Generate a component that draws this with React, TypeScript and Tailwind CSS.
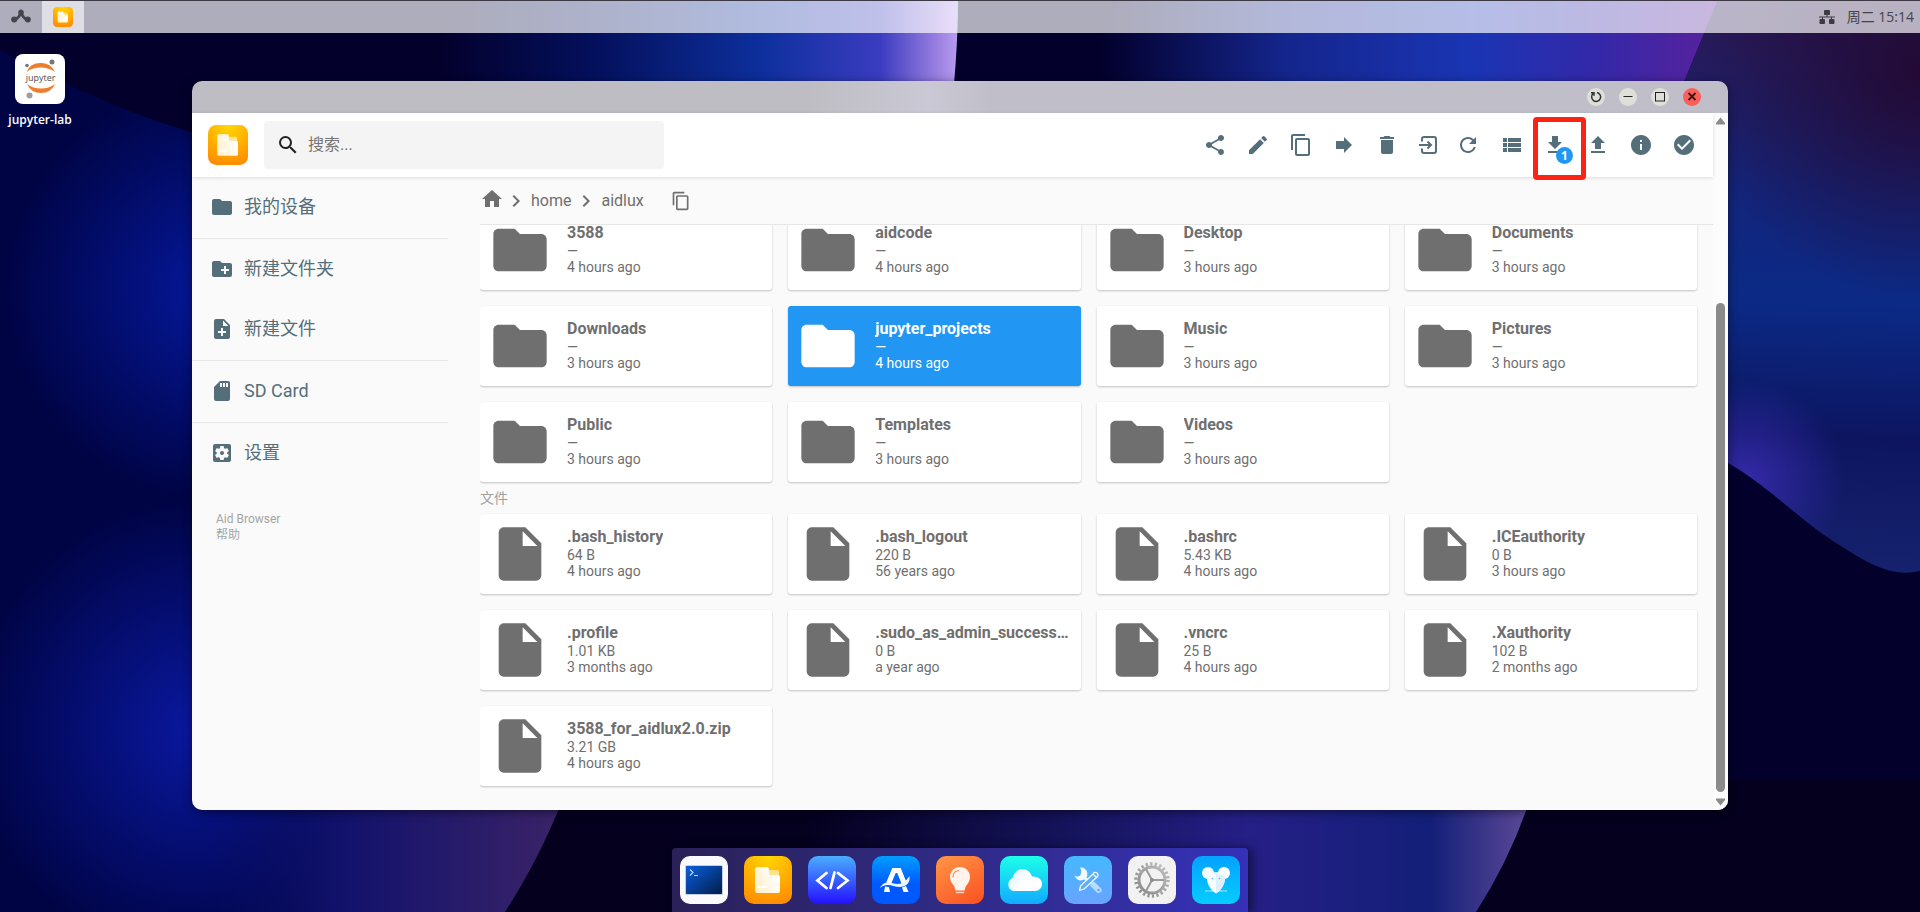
import React from 'react';
import {
  MdCheckCircle,
  MdContentCopy,
  MdCreateNewFolder,
  MdDelete,
  MdEdit,
  MdFolder,
  MdForward,
  MdHome,
  MdInfo,
  MdInsertDriveFile,
  MdKeyboardArrowRight,
  MdNoteAdd,
  MdRefresh,
  MdSdStorage,
  MdSearch,
  MdSettingsApplications,
  MdShare,
  MdViewList,
} from 'react-icons/md';

interface Entry {
  name: string;
  size: string;
  modified: string;
  selected?: boolean;
}

const folders: Entry[] = [
  { name: '3588', size: '—', modified: '4 hours ago' },
  { name: 'aidcode', size: '—', modified: '4 hours ago' },
  { name: 'Desktop', size: '—', modified: '3 hours ago' },
  { name: 'Documents', size: '—', modified: '3 hours ago' },
  { name: 'Downloads', size: '—', modified: '3 hours ago' },
  { name: 'jupyter_projects', size: '—', modified: '4 hours ago', selected: true },
  { name: 'Music', size: '—', modified: '3 hours ago' },
  { name: 'Pictures', size: '—', modified: '3 hours ago' },
  { name: 'Public', size: '—', modified: '3 hours ago' },
  { name: 'Templates', size: '—', modified: '3 hours ago' },
  { name: 'Videos', size: '—', modified: '3 hours ago' },
];

const files: Entry[] = [
  { name: '.bash_history', size: '64 B', modified: '4 hours ago' },
  { name: '.bash_logout', size: '220 B', modified: '56 years ago' },
  { name: '.bashrc', size: '5.43 KB', modified: '4 hours ago' },
  { name: '.ICEauthority', size: '0 B', modified: '3 hours ago' },
  { name: '.profile', size: '1.01 KB', modified: '3 months ago' },
  { name: '.sudo_as_admin_successful', size: '0 B', modified: 'a year ago' },
  { name: '.vncrc', size: '25 B', modified: '4 hours ago' },
  { name: '.Xauthority', size: '102 B', modified: '2 months ago' },
  { name: '3588_for_aidlux2.0.zip', size: '3.21 GB', modified: '4 hours ago' },
];

const rightSheet = 'M1718 0H1920V571C1890 578 1866 562 1833 541S1767 485 1728 463L1660 440V140Z';
const leftSheet = 'M0 50Q110 110 210 138L560 300V912H0Z';

const Wallpaper: React.FC = () => (
  <svg
    className="absolute inset-0 h-full w-full"
    viewBox="0 0 1920 912"
    preserveAspectRatio="none"
    aria-hidden="true"
  >
    <defs>
      <linearGradient id="wp-top" x1="440" x2="958" y1="0" y2="0" gradientUnits="userSpaceOnUse">
        <stop offset="0" stopColor="#03002c" />
        <stop offset="0.3" stopColor="#04105c" />
        <stop offset="0.62" stopColor="#0d2f9c" />
        <stop offset="0.85" stopColor="#3a3cc0" />
        <stop offset="0.96" stopColor="#9a7fe0" />
        <stop offset="1" stopColor="#b79df0" />
      </linearGradient>
      <linearGradient id="wp-topright" x1="1100" x2="1720" y1="0" y2="0" gradientUnits="userSpaceOnUse">
        <stop offset="0" stopColor="#03002c" />
        <stop offset="0.3" stopColor="#14258c" />
        <stop offset="0.6" stopColor="#1a35b4" />
        <stop offset="0.8" stopColor="#3328a8" />
        <stop offset="1" stopColor="#5a219c" />
      </linearGradient>
      <linearGradient id="wp-right" x1="1800" x2="1780" y1="30" y2="570" gradientUnits="userSpaceOnUse">
        <stop offset="0" stopColor="#281a58" />
        <stop offset="0.3" stopColor="#13257c" />
        <stop offset="0.5" stopColor="#0b2a86" />
        <stop offset="0.75" stopColor="#0d1560" />
        <stop offset="1" stopColor="#16226e" />
      </linearGradient>
      <radialGradient id="wp-maroon" cx="1920" cy="70" r="230" gradientUnits="userSpaceOnUse">
        <stop offset="0" stopColor="#220a34" />
        <stop offset="1" stopColor="#220a34" stopOpacity="0" />
      </radialGradient>
      <radialGradient id="wp-violet" cx="1745" cy="480" r="100" gradientUnits="userSpaceOnUse">
        <stop offset="0" stopColor="#3a2cb4" stopOpacity="0.85" />
        <stop offset="1" stopColor="#3a2cb4" stopOpacity="0" />
      </radialGradient>
      <radialGradient id="wp-left" cx="215" cy="290" r="210" gradientUnits="userSpaceOnUse">
        <stop offset="0" stopColor="#05189c" />
        <stop offset="1" stopColor="#05189c" stopOpacity="0" />
      </radialGradient>
      <radialGradient id="wp-leftlow" cx="200" cy="730" r="230" gradientUnits="userSpaceOnUse">
        <stop offset="0" stopColor="#0a18a0" />
        <stop offset="1" stopColor="#0a18a0" stopOpacity="0" />
      </radialGradient>
      <linearGradient id="wp-bottom1" x1="200" x2="560" y1="0" y2="0" gradientUnits="userSpaceOnUse">
        <stop offset="0" stopColor="#060b5c" stopOpacity="0" />
        <stop offset="0.4" stopColor="#12126c" />
        <stop offset="1" stopColor="#3a2368" />
      </linearGradient>
      <linearGradient id="wp-bottom2" x1="800" x2="1525" y1="0" y2="0" gradientUnits="userSpaceOnUse">
        <stop offset="0" stopColor="#04001e" />
        <stop offset="0.35" stopColor="#141258" />
        <stop offset="0.62" stopColor="#251f86" />
        <stop offset="0.87" stopColor="#131f78" />
        <stop offset="1" stopColor="#5a4796" />
      </linearGradient>
    </defs>
    <rect width="1920" height="912" fill="#03002c" />
    <path d={leftSheet} fill="#000445" />
    <path d={leftSheet} fill="url(#wp-left)" />
    <rect y="400" width="560" height="512" fill="url(#wp-leftlow)" />
    <rect x="500" y="780" width="1420" height="132" fill="#04001e" />
    <path d="M200 780H570Q545 850 505 912H200Z" fill="url(#wp-bottom1)" />
    <path d="M800 780H1536Q1516 850 1476 912H800Z" fill="url(#wp-bottom2)" />
    <path d="M440 0H958Q958 60 948 140H440Z" fill="url(#wp-top)" />
    <path d="M1100 0H1718L1660 140H1100Z" fill="url(#wp-topright)" />
    <path d={rightSheet} fill="url(#wp-right)" />
    <path d={rightSheet} fill="url(#wp-maroon)" />
    <path d={rightSheet} fill="url(#wp-violet)" />
  </svg>
);

const FilesLogo: React.FC<{ className?: string }> = ({ className }) => (
  <svg className={className} viewBox="0 0 48 48" aria-hidden="true">
    <defs>
      <radialGradient id="files-bg" cx="0.5" cy="0" r="1.05">
        <stop offset="0" stopColor="#ffd800" />
        <stop offset="1" stopColor="#ff8a00" />
      </radialGradient>
      <linearGradient id="files-sheet" x1="0" y1="1" x2="1" y2="0.6">
        <stop offset="0" stopColor="#ffeec4" />
        <stop offset="1" stopColor="#ffffff" />
      </linearGradient>
    </defs>
    <rect width="48" height="48" rx="10" fill="url(#files-bg)" />
    <path d="M23 14h10a2 2 0 0 1 2 2v6H23z" fill="#ffe38a" />
    <path
      d="M13 11h10a2 2 0 0 1 2 2v4a2 2 0 0 0 2 2h7a2 2 0 0 1 2 2v14a2 2 0 0 1-2 2H13a2 2 0 0 1-2-2V13a2 2 0 0 1 2-2z"
      fill="url(#files-sheet)"
    />
    <path d="M14 31h9" stroke="#fff" strokeWidth="1.5" strokeLinecap="round" />
  </svg>
);

const TerminalLogo: React.FC<{ className?: string }> = ({ className }) => (
  <svg className={className} viewBox="0 0 48 48" aria-hidden="true">
    <defs>
      <linearGradient id="term-screen" x1="0" y1="0" x2="1" y2="1">
        <stop offset="0" stopColor="#0a60e0" />
        <stop offset="1" stopColor="#021c48" />
      </linearGradient>
    </defs>
    <rect width="48" height="48" rx="10" fill="#fafafc" />
    <rect x="5" y="9" width="38" height="30" rx="1.5" fill="#8aa0c0" opacity="0.5" />
    <rect x="6" y="10" width="36" height="28" rx="1" fill="url(#term-screen)" />
    <path d="M10 13.5l3 3-3 3M14 19.5h4" fill="none" stroke="#b9d6ff" strokeWidth="1.2" />
  </svg>
);

const CodeLogo: React.FC<{ className?: string }> = ({ className }) => (
  <svg className={className} viewBox="0 0 48 48" aria-hidden="true">
    <defs>
      <linearGradient id="code-bg" x1="0" y1="0" x2="0" y2="1">
        <stop offset="0" stopColor="#4aaeff" />
        <stop offset="1" stopColor="#2410ff" />
      </linearGradient>
    </defs>
    <rect width="48" height="48" rx="10" fill="url(#code-bg)" />
    <path
      d="M18.5 17l-9 7.5 9 7.500M30 17l9.500 7.500L30 32M26.500 16.500l-4 15.500"
      fill="none"
      stroke="#fff"
      strokeWidth="2.8"
      strokeLinecap="round"
    />
  </svg>
);

const StoreLogo: React.FC<{ className?: string }> = ({ className }) => (
  <svg className={className} viewBox="0 0 48 48" aria-hidden="true">
    <defs>
      <linearGradient id="store-bg" x1="0" y1="0" x2="0" y2="1">
        <stop offset="0" stopColor="#009dff" />
        <stop offset="0.6" stopColor="#0058ff" />
        <stop offset="1" stopColor="#0058ff" />
      </linearGradient>
    </defs>
    <rect width="48" height="48" rx="10" fill="url(#store-bg)" />
    <path d="M16.5 27.500L22 14.500h5L32 27" fill="none" stroke="#fff" strokeWidth="5" />
    <path d="M8 32c3-7 9-6 14-4.500 7 1.500 11-1 15.500-7.500 1 7-3.500 11-10 11-7 0-12-5-19.500 1z" fill="#e8f4ff" />
    <path d="M13 30.500l4 .5 1 5h-6zM30 31.500l4-1.500 2.500 6h-5z" fill="#fff" />
  </svg>
);

const BulbLogo: React.FC<{ className?: string }> = ({ className }) => (
  <svg className={className} viewBox="0 0 48 48" aria-hidden="true">
    <defs>
      <linearGradient id="bulb-bg" x1="0.2" y1="0" x2="0.8" y2="1">
        <stop offset="0" stopColor="#ff9143" />
        <stop offset="1" stopColor="#fb5424" />
      </linearGradient>
    </defs>
    <rect width="48" height="48" rx="10" fill="url(#bulb-bg)" />
    <path
      d="M24 11c6 0 10 4.500 10 10 0 4-2 6-4 9-1 1.500-1 4-1.500 4.500h-9c-.5-.5-.5-3-1.500-4.500-2-3-4-5-4-9 0-5.500 4-10 10-10z"
      fill="#fff3ec"
    />
    <path d="M17 21c0-3.500 2-6 5.500-6.500" fill="none" stroke="#ff8a50" strokeWidth="1.2" strokeLinecap="round" />
    <path d="M20.500 36.500h7" stroke="#ffd9c8" strokeWidth="1.5" strokeLinecap="round" />
  </svg>
);

const CloudLogo: React.FC<{ className?: string }> = ({ className }) => (
  <svg className={className} viewBox="0 0 48 48" aria-hidden="true">
    <defs>
      <linearGradient id="cloud-bg" x1="0" y1="0" x2="0" y2="1">
        <stop offset="0" stopColor="#1dffe9" />
        <stop offset="1" stopColor="#12aaff" />
      </linearGradient>
      <linearGradient id="cloud-body" x1="0" y1="0" x2="1" y2="0.5">
        <stop offset="0" stopColor="#d3edff" />
        <stop offset="0.6" stopColor="#fff" />
      </linearGradient>
    </defs>
    <rect width="48" height="48" rx="10" fill="url(#cloud-bg)" />
    <path
      d="M13 35a7 7 0 0 1-.5-13c1-5 5-9 10-9 4.500 0 8 3 9.500 7.500 6-.5 10 3 10 7.500 0 4-3 7-7 7z"
      fill="url(#cloud-body)"
    />
  </svg>
);

const ToolsLogo: React.FC<{ className?: string }> = ({ className }) => (
  <svg className={className} viewBox="0 0 48 48" aria-hidden="true">
    <defs>
      <linearGradient id="tools-bg" x1="0" y1="0" x2="0" y2="1">
        <stop offset="0" stopColor="#45b8ff" />
        <stop offset="1" stopColor="#68a4ff" />
      </linearGradient>
    </defs>
    <rect width="48" height="48" rx="10" fill="url(#tools-bg)" />
    <path d="M29.500 29l5 5" stroke="#b7dcff" strokeWidth="6" strokeLinecap="round" />
    <circle cx="34.5" cy="34" r="1.3" fill="#68a4ff" />
    <path d="M16 11.500a6.500 6.500 0 1 1-5.500 7.500c1.500 2 4 2 5.500.5s1.800-5 0-8z" fill="#eef8ff" />
    <path d="M21 22l3 3" stroke="#eef8ff" strokeWidth="3" />
    <path
      d="M29 18l3.500 3.500-12.500 11.500-4.500 1.500 1-4.500zM29 18c1-3 5.500-1.500 5 1.500 0 1-.5 1.500-1.500 2"
      fill="#5aafff"
      stroke="#eef8ff"
      strokeWidth="1.3"
      strokeLinejoin="round"
    />
  </svg>
);

const GearLogo: React.FC<{ className?: string }> = ({ className }) => (
  <svg className={className} viewBox="0 0 48 48" aria-hidden="true">
    <defs>
      <linearGradient id="gear-metal" x1="1" y1="0" x2="0" y2="1">
        <stop offset="0" stopColor="#bcbcbc" />
        <stop offset="1" stopColor="#8a8a8a" />
      </linearGradient>
    </defs>
    <rect width="48" height="48" rx="10" fill="#f2f2f3" />
    <g fill="none" stroke="url(#gear-metal)">
      <circle cx="24" cy="24" r="16" strokeWidth="3.5" strokeDasharray="2.2 2.37" />
      <circle cx="24" cy="24" r="13" strokeWidth="3" />
    </g>
    <path d="M24 24h12M24 24l-6-11M24 24l-6 11" stroke="#9a9a9a" strokeWidth="2" />
    <circle cx="24" cy="24" r="2" fill="#8c8c8c" />
  </svg>
);

const MouseLogo: React.FC<{ className?: string }> = ({ className }) => (
  <svg className={className} viewBox="0 0 48 48" aria-hidden="true">
    <defs>
      <linearGradient id="mouse-bg" x1="0" y1="0" x2="0" y2="1">
        <stop offset="0" stopColor="#04a2ff" />
        <stop offset="1" stopColor="#06ccff" />
      </linearGradient>
    </defs>
    <rect width="48" height="48" rx="10" fill="url(#mouse-bg)" />
    <path d="M13 35h22" stroke="#8fe4ff" strokeWidth="1.2" />
    <circle cx="16" cy="17" r="6" fill="#f4fbff" />
    <circle cx="32" cy="17" r="6" fill="#fff" />
    <path d="M15 20c2-5 16-5 18 0 1 6-3 14-9 17.500C18 34 14 26 15 20z" fill="#f8fcff" />
    <path d="M24 18c5 0 8 1 9 3 0 6-3 13-9 16.500z" fill="#dff0fb" />
    <circle cx="20.5" cy="22.5" r="0.8" fill="#4ac0f0" />
    <circle cx="27.5" cy="22.5" r="0.8" fill="#4ac0f0" />
  </svg>
);

const dockApps = [
  { label: 'Terminal', Logo: TerminalLogo },
  { label: 'Files', Logo: FilesLogo },
  { label: 'Code', Logo: CodeLogo },
  { label: 'App Center', Logo: StoreLogo },
  { label: 'Tips', Logo: BulbLogo },
  { label: 'Cloud', Logo: CloudLogo },
  { label: 'Tools', Logo: ToolsLogo },
  { label: 'Settings', Logo: GearLogo },
  { label: 'Mouse', Logo: MouseLogo },
];

const TopBar: React.FC = () => (
  <header className="flex h-[33px] items-stretch border-t border-[#3c3844] bg-white/68">
    <button aria-label="Menu" className="flex w-[42px] items-center justify-center">
      <svg className="h-5 w-5" viewBox="0 0 20 20" aria-hidden="true">
        <path d="M3.5 13Q8 11 10 5.500 12 11 16.500 13" fill="none" stroke="#45444c" strokeWidth="2.8" />
        <circle cx="10" cy="5.5" r="2.8" fill="#45444c" />
        <circle cx="3.2" cy="12.5" r="3" fill="#45444c" />
        <circle cx="16.8" cy="12.5" r="3" fill="#45444c" />
      </svg>
    </button>
    <button aria-label="Files" className="flex w-[42px] items-center justify-center bg-white/60">
      <FilesLogo className="h-5 w-5" />
    </button>
    <div className="ml-auto flex items-center gap-3 pr-1.5 text-sm text-[#45444c]">
      <svg className="h-4 w-4" viewBox="0 0 16 16" fill="#3c3b42" aria-hidden="true">
        <rect x="5" y="1" width="6" height="5" rx="1" />
        <rect x="0.5" y="10" width="5.5" height="5" rx="1" />
        <rect x="10" y="10" width="5.5" height="5" rx="1" />
        <path d="M0 7.500h16v1H0zM7.500 6h1v2h-1zM3 8h1v2H3zM12 8h1v2h-1z" />
      </svg>
      <time className="font-['Open_Sans','Noto_Sans_CJK_SC',sans-serif]">周二 15:14</time>
    </div>
  </header>
);

const DesktopIcon: React.FC = () => (
  <button className="mt-[21px] flex w-20 flex-col items-center gap-2 self-start font-['Open_Sans',sans-serif] text-xs font-semibold text-white">
    <svg className="size-[50px]" viewBox="0 0 50 50" aria-hidden="true">
      <rect width="50" height="50" rx="8" fill="#fff" />
      <path d="M11.5 18Q15 9 25.500 9T40 18Q34 13.500 25.500 13.500T11.500 18z" fill="#f07c2e" />
      <path d="M12 30Q16 39 26 39T40 30Q34 34.500 26 34.500T12 30z" fill="#f07c2e" />
      <circle cx="37" cy="8" r="2.5" fill="#767677" />
      <circle cx="12" cy="11.5" r="1.8" fill="#767677" />
      <circle cx="14.5" cy="41.5" r="3" fill="#9e9e9e" />
      <text
        x="25.5"
        y="26.5"
        textAnchor="middle"
        fontSize="9"
        fontWeight="400"
        fontFamily="Open Sans, sans-serif"
        fill="#4e4e4e"
      >
        jupyter
      </text>
    </svg>
    jupyter-lab
  </button>
);

const TitleBar: React.FC = () => (
  <div className="flex h-8 shrink-0 items-center justify-end gap-3.5 bg-linear-to-r from-[#bebdc3] from-40% via-[#cac8d4] via-48% to-[#c0bfc9] to-52% pr-[27px]">
    <button aria-label="Restore" className="flex size-[18px] items-center justify-center rounded-full bg-[#dfdfd9]">
      <svg className="size-3" viewBox="0 0 12 12" fill="none" stroke="#333" strokeWidth="1.5" aria-hidden="true">
        <path d="M3.2 2.500A4.500 4.500 0 1 0 7 1.500M1 1.800h3v3" />
      </svg>
    </button>
    <button aria-label="Minimize" className="flex size-[18px] items-center justify-center rounded-full bg-[#dfdfd9]">
      <svg className="size-3" viewBox="0 0 12 12" fill="none" stroke="#222" strokeWidth="1.2" aria-hidden="true">
        <path d="M1.5 5.500h9" />
      </svg>
    </button>
    <button aria-label="Maximize" className="flex size-[18px] items-center justify-center rounded-full bg-[#dfdfd9]">
      <svg className="size-3" viewBox="0 0 12 12" fill="none" stroke="#222" strokeWidth="1" aria-hidden="true">
        <rect x="1.5" y="1.5" width="9" height="8.5" />
      </svg>
    </button>
    <button aria-label="Close" className="flex size-[18px] items-center justify-center rounded-full bg-[#fb5f5c]">
      <svg className="size-3" viewBox="0 0 12 12" fill="none" stroke="#3c1414" strokeWidth="1.8" aria-hidden="true">
        <path d="M2.5 2l7 7M9.500 2l-7 7" />
      </svg>
    </button>
  </div>
);

const ToolButton: React.FC<{ label: string; narrow?: boolean; children: React.ReactNode }> = ({
  label,
  narrow,
  children,
}) => (
  <button aria-label={label} className={`relative flex h-10 items-center justify-center ${narrow ? 'w-10' : 'w-[43px]'}`}>
    {children}
  </button>
);

const Toolbar: React.FC = () => (
  <div className="z-10 flex h-16 shrink-0 items-center bg-white pr-2 pl-4 shadow-[0_1px_4px_rgba(0,0,0,0.12)]">
    <FilesLogo className="size-10" />
    <div className="ml-4 flex h-12 w-[400px] items-center gap-2 rounded bg-[#f4f4f4] px-3">
      <MdSearch className="size-6 text-[#212121]" aria-hidden="true" />
      <input
        type="text"
        aria-label="搜索"
        placeholder="搜索..."
        className="min-w-0 flex-1 bg-transparent text-base outline-none placeholder:text-[#757575]"
      />
    </div>
    <div className="ml-auto flex items-center gap-0.5 text-2xl text-[#546e7a]">
      <div className="flex">
        <ToolButton label="Share"><MdShare /></ToolButton>
        <ToolButton label="Rename"><MdEdit /></ToolButton>
        <ToolButton label="Copy"><MdContentCopy /></ToolButton>
        <ToolButton label="Move"><MdForward /></ToolButton>
        <ToolButton label="Delete"><MdDelete /></ToolButton>
        <ToolButton label="Open in" narrow>
          <svg className="size-6" viewBox="0 0 24 24" fill="none" stroke="currentColor" strokeWidth="2" aria-hidden="true">
            <path d="M6 8.500V6a2 2 0 0 1 2-2h10a2 2 0 0 1 2 2v12a2 2 0 0 1-2 2H8a2 2 0 0 1-2-2v-2.500" />
            <path d="M3 12h11.500M11.500 8.500L15 12l-3.500 3.500" />
          </svg>
        </ToolButton>
        <ToolButton label="Refresh" narrow><MdRefresh /></ToolButton>
      </div>
      <div className="flex">
        <ToolButton label="Switch view"><MdViewList /></ToolButton>
        <ToolButton label="Download">
          <svg className="size-6" viewBox="0 0 24 24" fill="currentColor" aria-hidden="true">
            <path d="M19 9h-4V3H9v6H5l7 7 7-7zM5 18v2h14v-2H5z" />
          </svg>
          <span className="absolute right-[3px] bottom-px flex size-[17px] items-center justify-center rounded-full bg-[#2196f3] font-['Open_Sans',sans-serif] text-xs font-bold text-white">
            1
          </span>
          <span className="absolute -top-2 -right-2.5 -bottom-[15px] left-0 rounded border-[5px] border-[#fa2314]" />
        </ToolButton>
        <ToolButton label="Upload">
          <svg className="size-6" viewBox="0 0 24 24" fill="currentColor" aria-hidden="true">
            <path d="M9 16h6v-6h4l-7-7-7 7h4zM5 18h14v2H5z" />
          </svg>
        </ToolButton>
        <ToolButton label="Info"><MdInfo /></ToolButton>
        <ToolButton label="Select"><MdCheckCircle /></ToolButton>
      </div>
    </div>
  </div>
);

const NavItem: React.FC<{ icon: React.ReactNode; label: string }> = ({ icon, label }) => (
  <button className="flex h-[60px] w-full items-center gap-2.5 pl-[18px] text-lg text-[#546e7a]">
    <span className="text-2xl">{icon}</span>
    {label}
  </button>
);

const Sidebar: React.FC = () => (
  <nav className="w-64 shrink-0">
    <div className="border-b border-black/8 pb-px">
      <NavItem icon={<MdFolder />} label="我的设备" />
    </div>
    <div className="border-b border-black/8 pb-px">
      <NavItem icon={<MdCreateNewFolder />} label="新建文件夹" />
      <NavItem icon={<MdNoteAdd />} label="新建文件" />
    </div>
    <div className="border-b border-black/8 pb-px">
      <NavItem icon={<MdSdStorage />} label="SD Card" />
    </div>
    <NavItem icon={<MdSettingsApplications />} label="设置" />
    <div className="mt-7 flex flex-col items-start pl-6 text-xs leading-4 text-[#a5a5a5]">
      <span>Aid Browser</span>
      <a href="#help">帮助</a>
    </div>
  </nav>
);

const Breadcrumbs: React.FC = () => (
  <div className="flex h-12 shrink-0 items-center border-b border-black/8 text-base text-[#6f6f6f]">
    <a href="#root" aria-label="Home" className="-mt-1 text-2xl">
      <MdHome />
    </a>
    <MdKeyboardArrowRight className="size-6" />
    <a href="#home" className="px-[3px]">home</a>
    <MdKeyboardArrowRight className="size-6" />
    <a href="#aidlux" className="px-[3px]">aidlux</a>
    <button aria-label="Copy path" className="ml-6 text-xl">
      <MdContentCopy />
    </button>
  </div>
);

const EntryCard: React.FC<{ entry: Entry; icon: React.ReactNode }> = ({ entry, icon }) => (
  <button
    className={`flex h-20 items-center gap-[15px] rounded-[3px] px-2 text-left shadow-[0_1px_3px_rgba(0,0,0,0.08),0_1px_2px_rgba(0,0,0,0.16)] ${
      entry.selected ? 'bg-[#2196f3] text-white' : 'bg-white text-[#6f6f6f]'
    }`}
  >
    <span className="shrink-0 text-[64px]">{icon}</span>
    <span className="flex min-w-0 flex-col pb-0.5 text-sm leading-4">
      <span className="truncate text-base leading-5 font-bold">{entry.name}</span>
      <span>{entry.size}</span>
      <span>{entry.modified}</span>
    </span>
  </button>
);

// The list is scrolled to its end, so the first row slides under the breadcrumbs
const Listing: React.FC = () => (
  <main className="flex min-h-0 flex-1 flex-col justify-end overflow-hidden pr-4 pb-6">
    <div className="grid shrink-0 grid-cols-4 gap-4">
      {folders.map((entry) => (
        <EntryCard key={entry.name} entry={entry} icon={<MdFolder />} />
      ))}
    </div>
    <h2 className="flex h-8 shrink-0 items-center text-sm text-[#a0a0a0]">文件</h2>
    <div className="grid shrink-0 grid-cols-4 gap-4">
      {files.map((entry) => (
        <EntryCard key={entry.name} entry={entry} icon={<MdInsertDriveFile />} />
      ))}
    </div>
  </main>
);

const Scrollbar: React.FC = () => (
  <div className="flex w-[15px] shrink-0 flex-col items-center bg-[#fcfcfc] py-1">
    <svg className="h-2 w-[9px] shrink-0" viewBox="0 0 9 8" fill="#8b8b8b" aria-hidden="true">
      <path d="M4.5 0.500L9 6v1.500H0V6z" />
    </svg>
    <div className="flex w-[9px] flex-1 flex-col justify-end py-1.5">
      <div className="h-[74%] rounded-full bg-[#8b8b8b]" />
    </div>
    <svg className="h-2 w-[9px] shrink-0" viewBox="0 0 9 8" fill="#8b8b8b" aria-hidden="true">
      <path d="M4.5 7.500L9 2V.5H0V2z" />
    </svg>
  </div>
);

const FileWindow: React.FC = () => (
  <section
    aria-label="Aid Browser"
    className="mt-12 flex min-h-0 flex-col overflow-hidden rounded-[10px] font-[Roboto,'Noto_Sans_CJK_SC',sans-serif] shadow-[0_2px_10px_rgba(0,0,0,0.5)]"
  >
    <TitleBar />
    <div className="flex min-h-0 flex-1 bg-[#fafafa]">
      <div className="flex min-w-0 flex-1 flex-col">
        <Toolbar />
        <div className="flex min-h-0 flex-1">
          <Sidebar />
          <div className="ml-8 flex min-w-0 flex-1 flex-col">
            <Breadcrumbs />
            <Listing />
          </div>
        </div>
      </div>
      <Scrollbar />
    </div>
  </section>
);

const Dock: React.FC = () => (
  <footer className="mx-auto mt-[38px] flex h-16 shrink-0 gap-4 rounded-t bg-linear-to-r from-[#2a2158] to-[#3531b8] px-2 pt-2 shadow-[4px_0_8px_rgba(0,0,0,0.5)]">
    {dockApps.map(({ label, Logo }) => (
      <button key={label} aria-label={label} className="size-12">
        <Logo className="size-12" />
      </button>
    ))}
  </footer>
);

const App: React.FC = () => (
  <div className="relative h-screen overflow-hidden bg-[#03002c]">
    <Wallpaper />
    <div className="relative flex h-full flex-col">
      <TopBar />
      <div className="grid min-h-0 flex-1 grid-cols-[1fr_8fr_1fr] grid-rows-[minmax(0,1fr)]">
        <DesktopIcon />
        <FileWindow />
      </div>
      <Dock />
    </div>
  </div>
);

export default App;
